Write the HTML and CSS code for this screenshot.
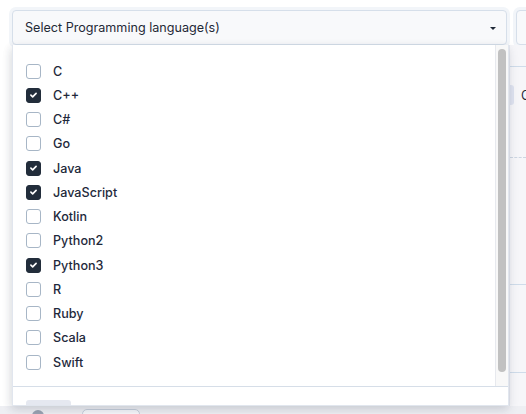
FILE: index.html
```html
<!DOCTYPE html>
<html>
<head>
<meta charset="utf-8">
<link rel="stylesheet" href="styles.css">
</head>
<body>
<div class="page">
  <div class="toprow">
    <div class="select">
      <span class="select-label">Select Programming language(s)</span>
      <span class="caret"></span>
    </div>
    <div class="select second"></div>
  </div>
  <div class="under">
    <div class="under-right">
      <div class="ur-line first"></div>
      <div class="ur-row"><span class="pill"></span><span class="ur-text">C</span></div>
      <div class="ur-dash"></div>
      <div class="ur-line mid"></div>
      <div class="ur-line low"></div>
    </div>
    <div class="under-bottom">
      <span class="circle"></span>
      <span class="outline-btn"></span>
    </div>
  </div>

  <div class="dropdown">
    <div class="list-wrap">
      <ul class="list">
        <li class="item"><span class="box"></span><span class="name">C</span></li>
        <li class="item checked"><span class="box"><svg viewBox="0 0 14 14" class="tick"><path d="M4.2 7.2 L6.1 9 L9.8 5.2"/></svg></span><span class="name">C++</span></li>
        <li class="item"><span class="box"></span><span class="name">C#</span></li>
        <li class="item"><span class="box"></span><span class="name">Go</span></li>
        <li class="item checked"><span class="box"><svg viewBox="0 0 14 14" class="tick"><path d="M4.2 7.2 L6.1 9 L9.8 5.2"/></svg></span><span class="name">Java</span></li>
        <li class="item checked"><span class="box"><svg viewBox="0 0 14 14" class="tick"><path d="M4.2 7.2 L6.1 9 L9.8 5.2"/></svg></span><span class="name">JavaScript</span></li>
        <li class="item"><span class="box"></span><span class="name">Kotlin</span></li>
        <li class="item"><span class="box"></span><span class="name">Python2</span></li>
        <li class="item checked"><span class="box"><svg viewBox="0 0 14 14" class="tick"><path d="M4.2 7.2 L6.1 9 L9.8 5.2"/></svg></span><span class="name">Python3</span></li>
        <li class="item"><span class="box"></span><span class="name">R</span></li>
        <li class="item"><span class="box"></span><span class="name">Ruby</span></li>
        <li class="item"><span class="box"></span><span class="name">Scala</span></li>
        <li class="item"><span class="box"></span><span class="name">Swift</span></li>
      </ul>
      <div class="scrollbar"><div class="thumb"></div></div>
    </div>
    <div class="footer">
      <span class="footer-btn"></span>
    </div>
  </div>
</div>
</body>
</html>
```

FILE: styles.css
```css
* { box-sizing: border-box; }
html, body { margin: 0; padding: 0; }
body {
  width: 526px;
  height: 414px;
  overflow: hidden;
  background: #ffffff;
  font-family: Inter, "Liberation Sans", sans-serif;
  color: #1e293b;
}
.page {
  position: relative;
  width: 526px;
  height: 414px;
  padding-top: 10px;
  overflow: hidden;
}
.toprow {
  display: flex;
  gap: 9px;
  padding-left: 12px;
  height: 35px;
}
.select {
  flex: 0 0 495px;
  height: 35px;
  background: #f8f9fb;
  border: 1px solid #d6dfea;
  border-radius: 4px;
  box-shadow: 0 0 0 3px #f2f5f9;
  display: flex;
  align-items: center;
  justify-content: space-between;
  padding: 0 10px 0 12px;
}
.select.second {
  flex: 0 0 40px;
}
.select-label {
  font-size: 12.6px;
  color: #1f2937;
}
.caret {
  width: 0;
  height: 0;
  border-left: 3px solid transparent;
  border-right: 3px solid transparent;
  border-top: 3.5px solid #1f2937;
  margin-top: 1px;
}
.under {
  position: relative;
  height: 369px;
  display: flex;
  flex-direction: column;
}
.under-right {
  margin-left: 509px;
  flex: 1;
  background: #f6f6f9;
  border-left: 1px solid #e6e8ef;
  position: relative;
}
.ur-line {
  position: absolute;
  left: 0;
  right: 0;
  height: 1px;
  background: #cfdcea;
}
.ur-line.first { top: 21px; }
.ur-line.mid { top: 239px; }
.ur-line.low { top: 327px; }
.ur-dash {
  position: absolute;
  left: 0; right: 0;
  top: 112px;
  border-top: 1px dashed #cdd6e2;
}
.ur-row {
  position: absolute;
  top: 40px;
  left: 0;
  display: flex;
  align-items: center;
  height: 20px;
}
.pill {
  width: 4px;
  height: 20px;
  background: #dfe3f0;
  border-radius: 0 3px 3px 0;
}
.ur-text {
  margin-left: 7px;
  font-size: 12.6px;
  color: #1f2937;
}
.under-bottom {
  height: 8px;
  background: #eeeff3;
  position: relative;
}
.circle {
  position: absolute;
  left: 32px; top: 4px;
  width: 12px; height: 12px;
  border-radius: 50%;
  background: #9aa3b2;
}
.outline-btn {
  position: absolute;
  left: 82px; top: 3px;
  width: 58px; height: 14px;
  border: 1px solid #c6cedb;
  border-radius: 5px;
  background: #f6f7fa;
}

.dropdown {
  position: absolute;
  top: 45px;
  left: 12px;
  width: 497px;
  height: 361px;
  background: #ffffff;
  border: 1px solid #e1e6ee;
  border-top: none;
  box-shadow: 0 4px 10px rgba(40, 50, 70, 0.12), -2px 2px 8px rgba(40, 50, 70, 0.08);
  display: flex;
  flex-direction: column;
  overflow: hidden;
}
.list-wrap {
  display: flex;
  flex: 0 0 342px;
  border-bottom: 1px solid #d6dee8;
}
.list {
  flex: 1;
  list-style: none;
  margin: 0;
  padding: 14px 0 0 13px;
  border-right: 1px solid #e7e9ee;
}
.item {
  display: flex;
  align-items: center;
  height: 24.25px;
}
.box {
  width: 15px;
  height: 15px;
  border: 1px solid #a7b6c6;
  border-radius: 3px;
  background: #fff;
  display: flex;
  align-items: center;
  justify-content: center;
}
.checked .box {
  background: #222d3b;
  border-color: #222d3b;
}
.tick {
  width: 14px;
  height: 14px;
}
.tick path {
  fill: none;
  stroke: #ffffff;
  stroke-width: 1.8;
  stroke-linecap: round;
  stroke-linejoin: round;
}
.name {
  margin-left: 12px;
  font-size: 12.6px;
  font-weight: 500;
  color: #1e293b;
}
.scrollbar {
  width: 12px;
  background: #f8f8f8;
  padding: 4px 2px 0 2px;
}
.thumb {
  width: 8px;
  height: 323px;
  background: #c1c1c1;
  border-radius: 4px;
}
.footer {
  flex: 1;
  position: relative;
}
.footer-btn {
  position: absolute;
  left: 13px;
  top: 13px;
  width: 45px;
  height: 12px;
  background: #e5e8f0;
  border-radius: 3px;
}
```
